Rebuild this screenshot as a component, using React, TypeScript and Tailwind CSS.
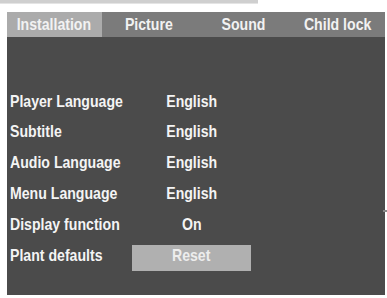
const tabs = ["Installation", "Picture", "Sound", "Child lock"];

const rows = [
  { label: "Player Language", value: "English" },
  { label: "Subtitle", value: "English" },
  { label: "Audio Language", value: "English" },
  { label: "Menu Language", value: "English" },
  { label: "Display function", value: "On" },
];

// narrow bold face, squeezed from Liberation Sans
function Narrow({ children, center }: { children: React.ReactNode; center?: boolean }) {
  return (
    <span
      className={
        "inline-block whitespace-nowrap scale-x-[0.83] " + (center ? "origin-center" : "origin-left")
      }
    >
      {children}
    </span>
  );
}

export default function App() {
  return (
    <div
      className="relative w-[387px] h-[298px] bg-white overflow-hidden"
      style={{ fontFamily: '"Liberation Sans", Arial, sans-serif' }}
    >
      <div className="h-[4px] w-[258px] bg-[#cfcfcf] border-b border-[#e4e4e4]" />

      <div className="ml-[7px] mt-[8px] w-[378px] h-[283px] flex flex-col bg-[#4b4b4b]">
        <div className="grid grid-cols-4 h-[25px] bg-[#7b7b7b] text-[17px] font-bold text-[#f2f2f2] leading-none">
          {tabs.map((t, i) => (
            <div
              key={t}
              className={
                "flex items-center justify-center " + (i === 0 ? "bg-[#ababab]" : "")
              }
            >
              <Narrow center>{t}</Narrow>
            </div>
          ))}
        </div>

        <div className="flex flex-col pt-[49px] pl-[3px] text-[17px] font-bold text-[#f4f4f4]">
          {rows.map((r) => (
            <div key={r.label} className="flex items-center h-[30.8px]">
              <div className="w-[122px]">
                <Narrow>{r.label}</Narrow>
              </div>
              <div className="w-[119px] text-center">
                <Narrow center>{r.value}</Narrow>
              </div>
            </div>
          ))}
          <div className="flex items-center h-[30.8px]">
            <div className="w-[122px]">
              <Narrow>Plant defaults</Narrow>
            </div>
            <div className="w-[119px] h-[26px] mt-[5px] pb-[5px] flex items-center justify-center bg-[#b0b0b0] text-[#ededed]">
              <Narrow center>Reset</Narrow>
            </div>
          </div>
        </div>
      </div>

      <div className="absolute left-[383px] top-[210px] w-[4px] h-[2px] bg-[#8a8a8a]" />
    </div>
  );
}
